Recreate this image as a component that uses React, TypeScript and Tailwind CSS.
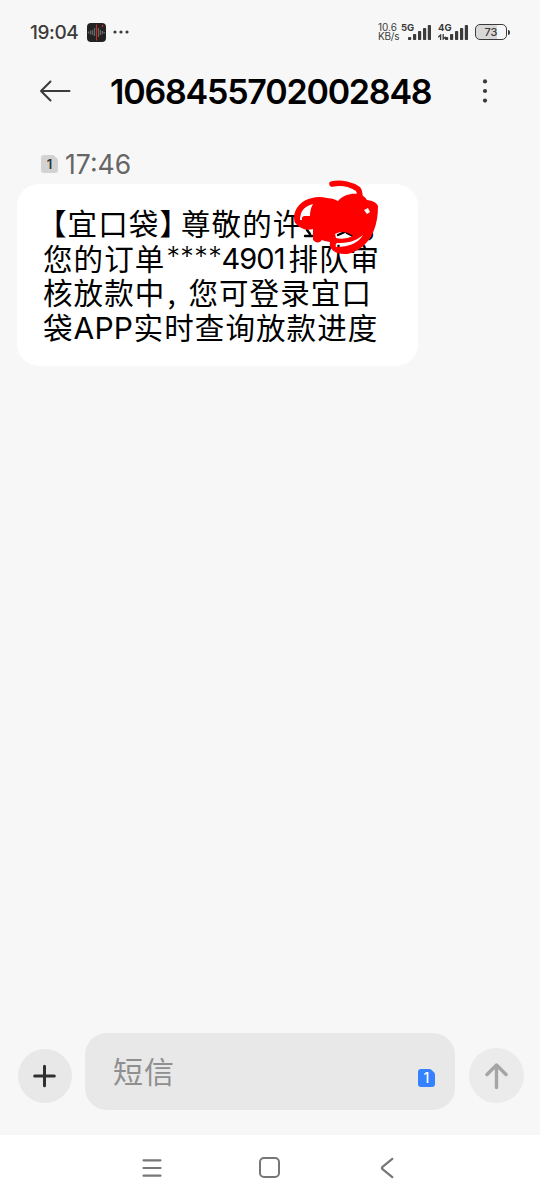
type Segment = { text: string; className?: string }

const message: Segment[][] = [
  [
    { text: "【宜口袋】", className: "-ml-[6px] w-[144px]" },
    { text: "尊敬的许" },
    { text: ",", className: "ml-[63px]" },
  ],
  [
    { text: "您的订单" },
    { text: "****", className: "w-[56px] pl-px font-['Inter'] text-[27px] font-light tracking-[0.4px]" },
    { text: "4901", className: "w-[67px] pt-[2px] font-['Inter'] text-[29px] tracking-[-0.9px]" },
    { text: "排队审" },
  ],
  [{ text: "核放款中" }, { text: ",", className: "w-[23px] pl-[2px]" }, { text: "您可登录宜口" }],
  [
    { text: "袋" },
    { text: "APP", className: "w-[60px] pt-[2px] font-['Inter'] text-[30px] tracking-[0.1px]" },
    { text: "实时查询放款进度" },
  ],
]

function SimBadge({ className }: { className: string }) {
  return (
    <svg viewBox="0 0 17 18" className={className} aria-hidden="true">
      <path d="M3 0H11.5Q12.7 0 13.6 .9L16.1 3.4Q17 4.3 17 5.5V15Q17 18 14 18H3Q0 18 0 15V3Q0 0 3 0Z" />
    </svg>
  )
}

function Signal() {
  return (
    <svg width="23" height="15" viewBox="0 0 23 15" fill="#3b3b3b" aria-hidden="true">
      <rect x="0" y="12" width="3.2" height="3" rx=".7" />
      <rect x="5" y="9" width="3.2" height="6" rx=".7" />
      <rect x="10" y="6" width="3.2" height="9" rx=".7" />
      <rect x="15" y="3" width="3.2" height="12" rx=".7" />
      <rect x="19.8" y="0" width="3.2" height="15" rx=".7" />
    </svg>
  )
}

function StatusBar() {
  return (
    <div className="flex h-[64px] items-center pr-[30px] pl-[30px] text-[#3b3b3b]">
      <span className="w-[57px] text-[19px] leading-none font-medium tracking-[-0.4px]">19:04</span>
      <svg width="19" height="19" viewBox="0 0 19 19" aria-hidden="true">
        <rect width="19" height="19" rx="4" fill="#222" />
        <path d="M1.5 8.5v2M3.5 7.5v4M5.5 7v5M7.5 5v8M11.5 5v9M13.5 7v5M15.5 8v3M17.3 9v1.5" stroke="#666" strokeWidth="1.3" />
        <path d="M9.5 1.5v16" stroke="#d32b20" strokeWidth="1.1" />
        <path d="M15.5 2v2" stroke="#d32b20" strokeWidth="1.3" />
      </svg>
      <svg width="16" height="4" viewBox="0 0 16 4" fill="#3b3b3b" className="ml-[7px]" aria-hidden="true">
        <circle cx="2" cy="2" r="1.6" />
        <circle cx="8" cy="2" r="1.6" />
        <circle cx="14" cy="2" r="1.6" />
      </svg>
      <div className="ml-auto flex items-center">
        <div className="w-[23px] text-[10px] leading-[9.5px] whitespace-nowrap">
          <div>10.6</div>
          <div className="tracking-[-0.2px]">KB/s</div>
        </div>
        <div className="relative h-[19px] w-[30px]">
          <span className="absolute top-0 left-0 text-[9.5px] leading-[10px] font-bold">5G</span>
          <div className="absolute right-0 bottom-[2px]">
            <Signal />
          </div>
        </div>
        <div className="relative ml-[7px] h-[19px] w-[30px]">
          <span className="absolute top-0 left-0 text-[9.5px] leading-[10px] font-bold">4G</span>
          <svg width="8" height="6" viewBox="0 0 8 6" className="absolute bottom-[2px] left-0" fill="none" stroke="#3b3b3b" strokeWidth="1.3" aria-hidden="true">
            <path d="M.3 3.2 2.6 1v5M7.7 2.8 5.2 5V0" />
          </svg>
          <div className="absolute right-0 bottom-[2px]">
            <Signal />
          </div>
        </div>
        <div className="ml-[7px] flex h-[16px] w-[32px] items-center justify-center rounded-[5px] border-[1.5px] border-[#3b3b3b] bg-linear-to-r from-[#d8d8d8] from-70% to-[#f7f7f7] to-70%">
          <span className="text-[11px] leading-none font-medium">73</span>
        </div>
        <div className="ml-px h-[5px] w-[2px] rounded-r bg-[#3b3b3b]" />
      </div>
    </div>
  )
}

function Scribble() {
  return (
    <svg width="100" height="85" viewBox="0 0 100 85" fill="none" strokeLinecap="round" strokeLinejoin="round" className="absolute top-[-9px] left-[268px]" aria-hidden="true">
      {/* bits of the covered characters */}
      <path d="M20 61h13M22 55l3 4M53 60l9-4M62 58l8 4" stroke="#000" strokeWidth="2.4" />
      <path
        fill="#fe0000"
        fillRule="evenodd"
        d="M9 43C9 33 17 25 27 23Q34 21 42 23Q48 23 53 26C58 20 66 18 73 19Q79 20 82 25Q91 26 93 31Q93 45 89 55C85 67 74 77 62 79C51 80 43 74 45 67Q39 66 37 65Q33 70 28 65V54Q19 57 11 49Q9 47 9 43Z
           M15 45Q15 32 28 29Q25 34 25 41L19 41Q16 42 17 45Z
           M50 59Q59 54 68 61Q60 65 51 63Z
           M51 72Q50 69 52 68C62 68 70 67 78 60Q71 72 51 72Z
           M79 35L83 33L85 37L82 39Z"
      />
      <path d="M47 9C57 7 67 10 73 14Q76 18 74 27" stroke="#fe0000" strokeWidth="5.6" />
    </svg>
  )
}

export default function App() {
  return (
    <div className="flex h-[1200px] w-[540px] flex-col bg-[#f7f7f7] font-['Inter','Noto_Sans_CJK_SC',sans-serif] text-black">
      <StatusBar />

      <header className="flex h-[54px] items-center pl-[39px]">
        <svg width="32" height="22" viewBox="0 0 32 22" fill="none" stroke="#3b3b3b" strokeWidth="2" strokeLinecap="round" strokeLinejoin="round" aria-hidden="true">
          <path d="M30.5 11H2M11.5 1.5 2 11l9.5 9.5" />
        </svg>
        <h1 className="ml-[39px] w-[325px] pt-[2px] text-[34px] leading-none font-[560] tracking-[-1.2px] whitespace-nowrap">
          1068455702002848
        </h1>
        <svg width="6" height="24" viewBox="0 0 6 24" fill="#3b3b3b" className="ml-[47px]" aria-hidden="true">
          <circle cx="3" cy="2.4" r="2.1" />
          <circle cx="3" cy="12" r="2.1" />
          <circle cx="3" cy="21.6" r="2.1" />
        </svg>
      </header>

      <main className="flex-1 pt-[26px] pl-[17px]">
        <div className="flex h-[40px] items-center pl-[24px]">
          <div className="relative h-[18px] w-[17px]">
            <SimBadge className="h-[18px] w-[17px] fill-[#d2d2d2]" />
            <span className="absolute inset-0 text-center text-[13px] leading-[18px] font-semibold text-[#333]">1</span>
          </div>
          <span className="ml-[7px] text-[26.5px] leading-none text-[#666]">17:46</span>
        </div>

        <div className="relative h-[182px] w-[401px] rounded-[22px] bg-white pt-[21px] pl-[26px] font-['Noto_Sans_CJK_SC',sans-serif] text-[29.5px] leading-[34.6px] tracking-[1.1px]">
          {message.map((line, i) => (
            <div key={i} className="flex h-[34.6px] whitespace-nowrap">
              {line.map((segment, j) => (
                <span key={j} className={segment.className}>
                  {segment.text}
                </span>
              ))}
            </div>
          ))}
          <Scribble />
        </div>
      </main>

      <div className="flex h-[102px] items-start pl-[18px]">
        <button className="mt-[16px] flex size-[54px] items-center justify-center rounded-full bg-[#e8e8e8]" aria-label="+">
          <svg width="24" height="24" viewBox="0 0 24 24" stroke="#303030" strokeWidth="3" strokeLinecap="round">
            <path d="M11.5 2.2v19.6M1.7 12h19.6" />
          </svg>
        </button>
        <div className="ml-[13px] flex h-[77px] w-[370px] items-center rounded-[22px] bg-[#e8e8e8] pr-[20px] pl-[28px]">
          <span className="pt-px text-[30px] leading-none tracking-[1px] text-[#8f8f8f]">短信</span>
          <div className="relative mt-[13px] ml-auto h-[18px] w-[17px]">
            <SimBadge className="h-[18px] w-[17px] fill-[#3482ff]" />
            <span className="absolute inset-0 text-center text-[14px] leading-[18px] font-medium text-white">1</span>
          </div>
        </div>
        <button className="mt-[15px] ml-[14px] flex size-[55px] items-center justify-center rounded-full bg-[#ebebeb]" aria-label="↑">
          <svg width="24" height="28" viewBox="0 0 24 28" fill="none" stroke="#a5a5a5" strokeWidth="3.4" strokeLinecap="round" strokeLinejoin="round">
            <path d="M11.5 25.5V3M2 12.5 11.5 3l9.5 9.5" />
          </svg>
        </button>
      </div>

      <nav className="flex h-[65px] items-center bg-white pl-[142px]">
        <svg width="20" height="20" viewBox="0 0 20 20" stroke="#777" strokeWidth="2.2" strokeLinecap="round" aria-hidden="true">
          <path d="M1.5 2.3h17M1.5 10h17M1.5 17.7h17" />
        </svg>
        <div className="ml-[97px] size-[21px] rounded-[5px] border-2 border-[#777]" />
        <svg width="14" height="22" viewBox="0 0 14 22" fill="none" stroke="#777" strokeWidth="2.2" strokeLinecap="round" strokeLinejoin="round" className="ml-[100px]" aria-hidden="true">
          <path d="M12.3 1.8 2.5 9.8Q1.3 11 2.5 12.2L12.3 20.2" />
        </svg>
      </nav>
    </div>
  )
}
